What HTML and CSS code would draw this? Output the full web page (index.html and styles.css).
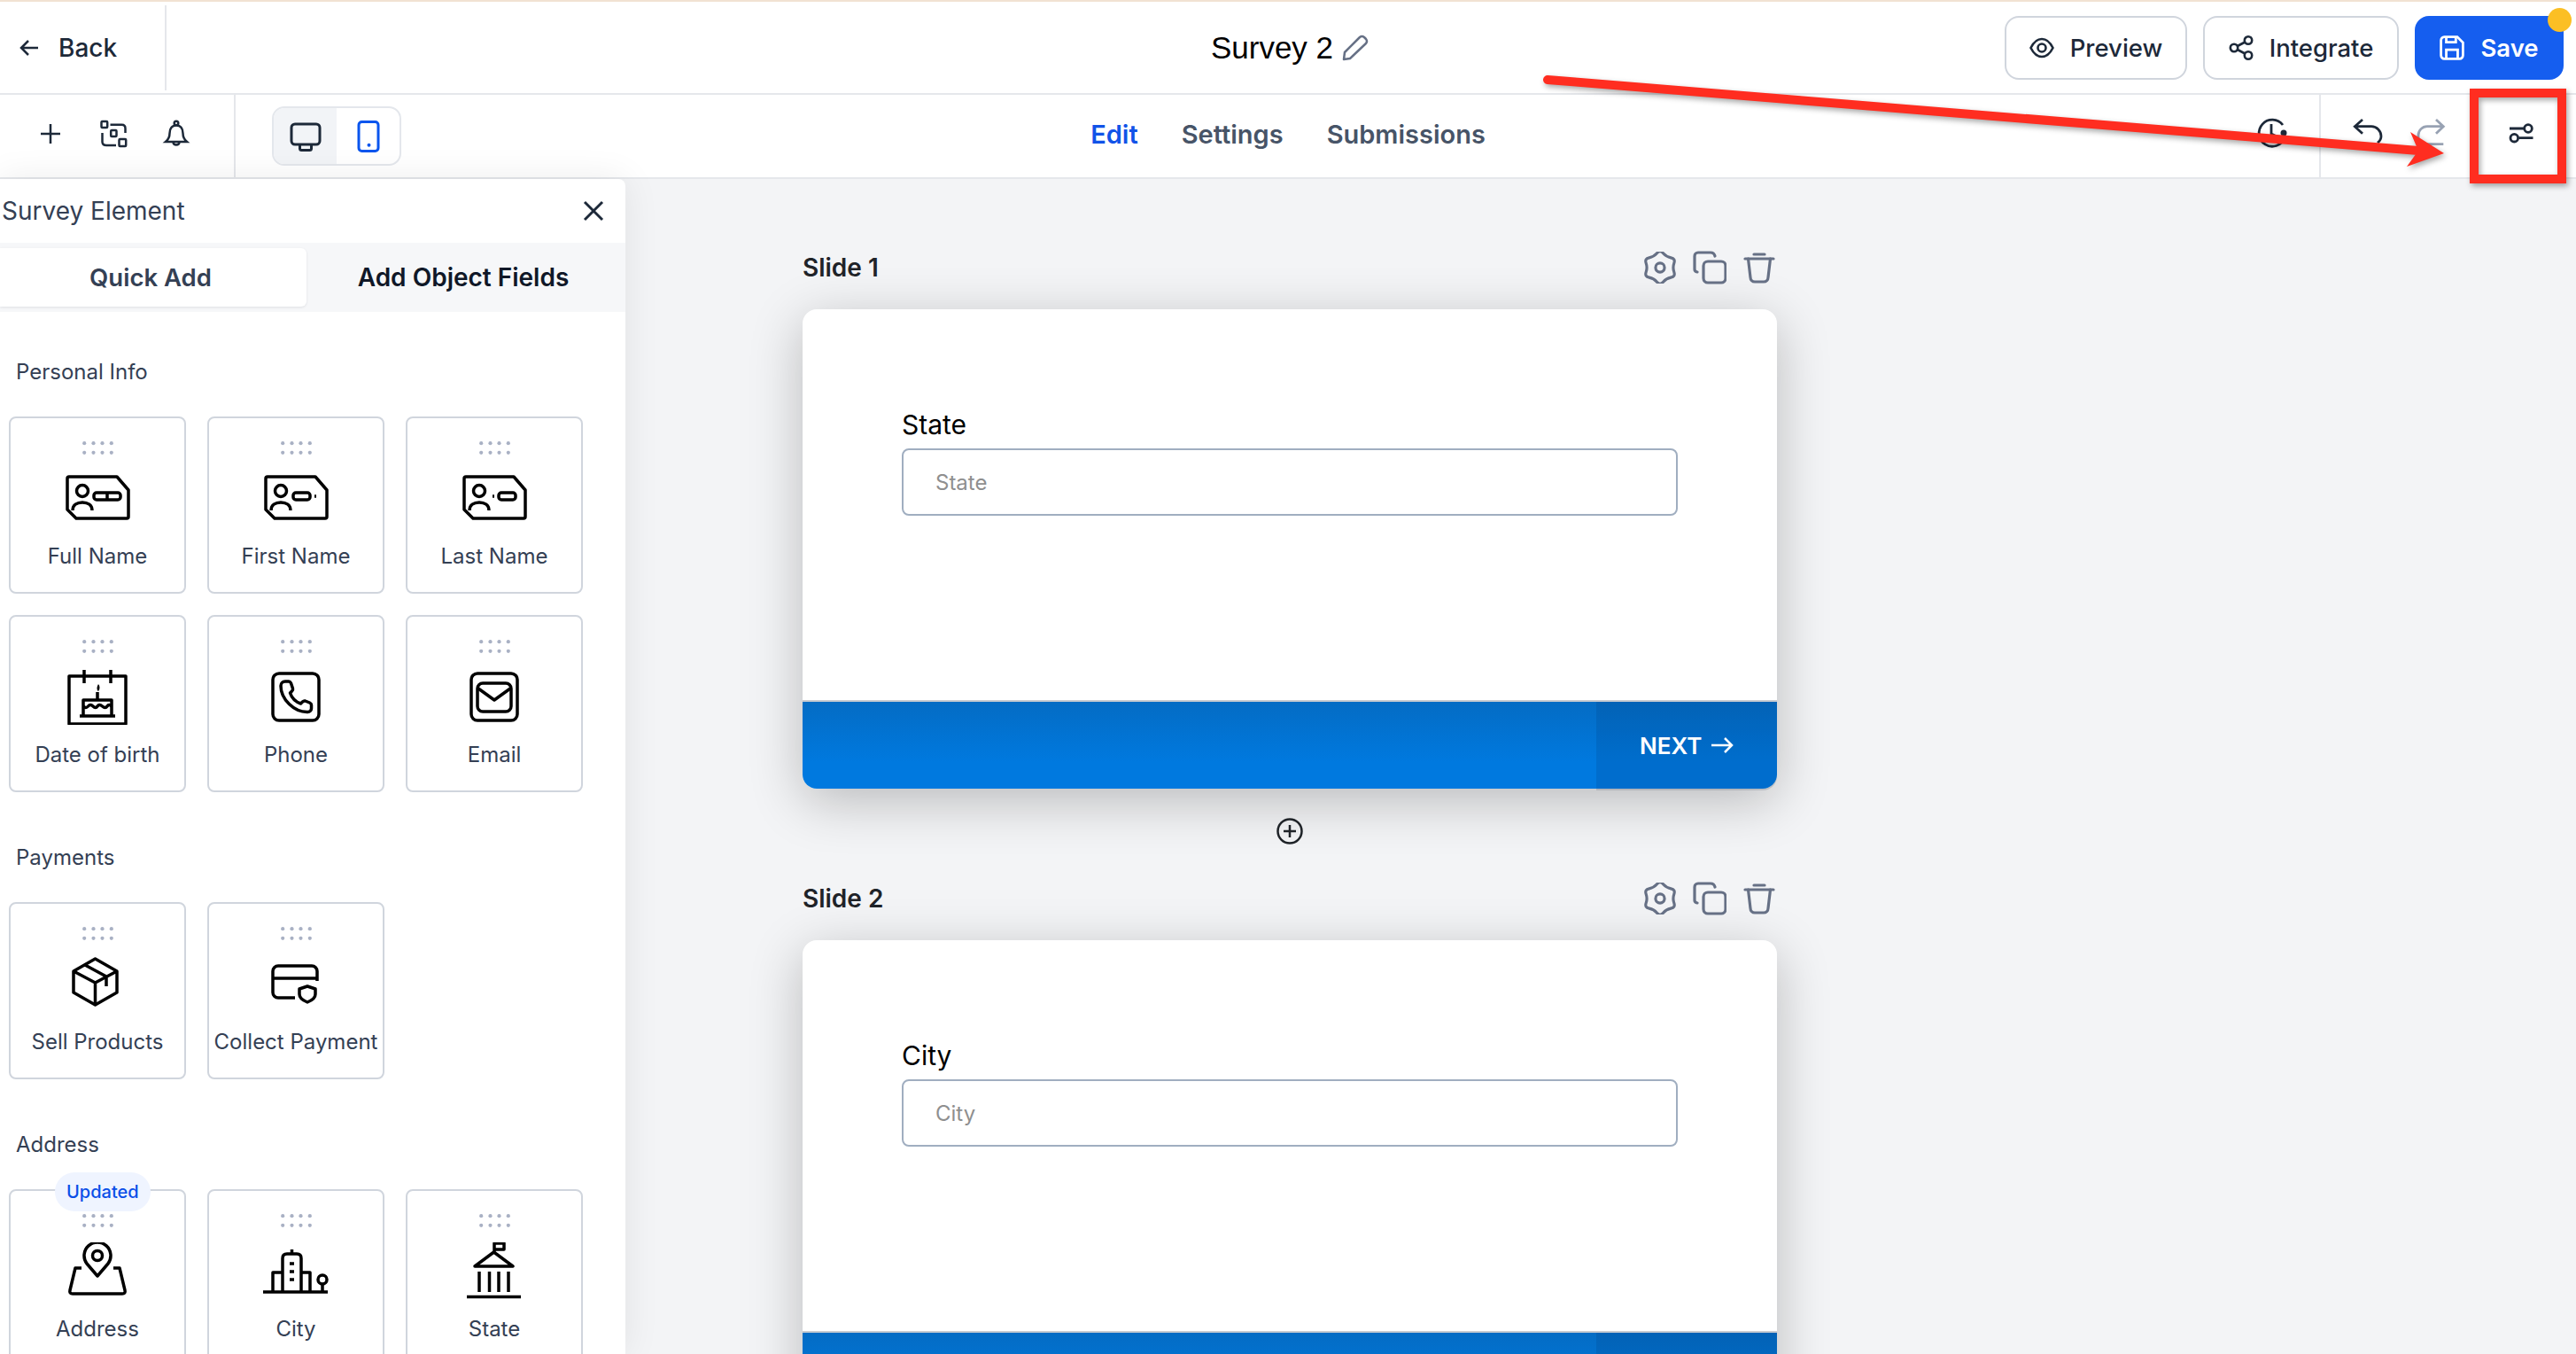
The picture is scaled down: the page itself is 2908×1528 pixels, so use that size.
FILE: index.html
```html
<!DOCTYPE html>
<html lang="en">

<head>
    <meta charset="UTF-8">
    <title>Survey 2</title>
    <link rel="stylesheet" href="styles.css">
</head>

<body>
    <svg class="defs" width="0" height="0">
        <symbol id="dots" viewBox="0 0 35 15">
            <g fill="#a9b1c4">
                <circle cx="2.200" cy="2.200" r="2.100"/><circle cx="12.500" cy="2.200" r="2.100"/><circle cx="22.500" cy="2.200" r="2.100"/><circle cx="32.800" cy="2.200" r="2.100"/>
                <circle cx="2.200" cy="12.800" r="2.100"/><circle cx="12.500" cy="12.800" r="2.100"/><circle cx="22.500" cy="12.800" r="2.100"/><circle cx="32.800" cy="12.800" r="2.100"/>
            </g>
        </symbol>
        <symbol id="gear" viewBox="2.500 2 31 32">
            <path d="M21.100 3.600Q24.250 7.170 28.900 8.100Q33.600 9 32.050 13.500Q30.500 18 32.050 22.500Q33.600 27 28.900 27.900Q24.250 28.830 21.100 32.400Q18 36 14.900 32.400Q11.750 28.830 7.100 27.900Q2.400 27 3.950 22.500Q5.500 18 3.950 13.500Q2.400 9 7.100 8.100Q11.750 7.170 14.900 3.600Q18 0 21.100 3.600z" fill="none" stroke="#667085" stroke-width="2.800"/>
            <circle cx="18" cy="18" r="4.500" fill="none" stroke="#667085" stroke-width="2.800"/>
        </symbol>
        <symbol id="copy" viewBox="0 0 38 38">
            <g fill="none" stroke="#667085" stroke-width="3.200" stroke-linecap="round">
                <rect x="12" y="12" width="25" height="24" rx="5"/>
                <path d="M5 24Q2 23.500 2 21V6a4 4 0 0 1 4-4H20q4 0 5 4"/>
            </g>
        </symbol>
        <symbol id="trash" viewBox="0 0 36 36">
            <g fill="none" stroke="#667085" stroke-width="3.200" stroke-linecap="round">
                <path d="M2 8h32"/>
                <path d="M12 3h12"/>
                <path d="M5.500 8l2.500 21a5 5 0 0 0 5 5h10a5 5 0 0 0 5-5l2.500-21"/>
            </g>
        </symbol>
        <symbol id="id-base" viewBox="0 0 80 64">
            <path d="M8 8h54l13 15v30a2 2 0 0 1-2 2H16L6 45V10a2 2 0 0 1 2-2z"/>
            <circle cx="23" cy="24" r="6.500"/>
            <path d="M12 46c0-6 5-9 11-9s11 3 11 9"/>
        </symbol>
    </svg>

    <div class="stripe"></div>

    <header class="topbar">
        <a class="back">
            <svg class="i24" viewBox="0 0 24 24"><path d="M21 12H3M10 4l-8 8 8 8"/></svg>
            <span>Back</span>
        </a>
        <div class="title">
            <span>Survey 2</span>
            <svg class="pencil" viewBox="0 0 30 30"><path d="M2 28l1-8L20 3q2.500-2 5 0l2 2q2 2.500 0 5L9 27z"/></svg>
        </div>
        <div class="actions">
            <button class="btn btn-preview">
                <svg class="btn-icon" viewBox="0 0 28 24"><path d="M1.500 12C5 5 9 2 14 2s9 3 12.500 10C23 19 19 22 14 22S5 19 1.500 12z"/><circle cx="14" cy="12" r="4.500"/></svg>
                Preview
            </button>
            <button class="btn btn-integrate">
                <svg class="btn-icon" viewBox="0 0 28 28"><circle cx="6" cy="14" r="4.200"/><circle cx="22" cy="5.500" r="4.200"/><circle cx="22" cy="22.500" r="4.200"/><path d="M9.800 12l8.500-4.500M9.800 16l8.500 4.500"/></svg>
                Integrate
            </button>
            <button class="btn btn-save">
                <svg class="btn-icon" viewBox="0 0 26 26"><path d="M5 1.500h13.500l6 6V21a3.500 3.500 0 0 1-3.500 3.500H5A3.500 3.500 0 0 1 1.500 21V5A3.500 3.500 0 0 1 5 1.500z"/><path d="M7 1.500V7h10V1.500M7 24.500V15h12v9.500"/></svg>
                Save
                <span class="save-dot"></span>
            </button>
        </div>
    </header>

    <nav class="toolbar">
        <div class="tools-left">
            <div class="tools-add">
                <svg class="tool" viewBox="0 0 36 36"><path d="M18 7v22M7 18h22"/></svg>
                <svg class="tool" viewBox="0 0 36 36"><rect x="4.500" y="4" width="6.700" height="7" rx="1"/><rect x="15.200" y="14" width="6.300" height="7" rx="1"/><rect x="24.500" y="24" width="7.700" height="8" rx="1"/><path d="M14.500 7.700H27.500q4 0 4 4.300V17M5.500 17V27q0 4 4.700 4H21"/></svg>
                <svg class="tool" viewBox="0 0 36 36"><path d="M18 8.500c-5 0-7.500 4-7.500 9 0 4.500-1.500 7-4.500 9.500h24c-3-2.500-4.500-5-4.500-9.500 0-5-2.500-9-7.500-9z"/><circle cx="18" cy="6" r="2.300"/><path d="M14.500 27.500c.5 4 6.500 4 7 0"/></svg>
            </div>
            <div class="device-toggle">
                <span class="device device-on">
                    <svg class="device-icon" viewBox="0 0 36 36"><rect x="2" y="4" width="32" height="23" rx="4"/><path d="M11.500 27v4.500a2 2 0 0 0 2 2h9a2 2 0 0 0 2-2V27"/></svg>
                </span>
                <span class="device">
                    <svg class="device-icon device-phone" viewBox="0 0 36 36"><rect x="7" y="1.500" width="22" height="33" rx="3.500"/><circle class="phone-dot" cx="18.500" cy="27.800" r="2"/></svg>
                </span>
            </div>
        </div>
        <div class="tabs">
            <a class="tab tab-on">Edit</a>
            <a class="tab">Settings</a>
            <a class="tab">Submissions</a>
        </div>
        <div class="tools-right">
            <svg class="tool-r" viewBox="0 0 40 40"><path d="M31 10A15 15 0 1 0 33 25M18 9v11l6 3"/><circle class="fill-dark" cx="32" cy="19" r="3.500"/></svg>
            <div class="history">
                <svg class="tool-r" viewBox="0 0 40 40"><path d="M15 4L6.300 11.700L15 19.700M6.300 11.700H25a11 11 0 0 1 11 11c0 3-1.500 5.500-4 7.500"/></svg>
                <svg class="tool-r tool-off" viewBox="0 0 40 40"><path d="M26 4l8.300 7.700L26 19.700M34.300 11.700H16a10 10 0 0 0-10 10v4M6 31.700H34.300"/></svg>
                <svg class="tool-r" viewBox="0 0 40 40"><path d="M7 14H23.500M17.500 24.700H33.500"/><circle cx="28" cy="14" r="4.300"/><circle cx="12.300" cy="24.700" r="4.300"/></svg>
            </div>
        </div>
    </nav>

    <main class="workspace">
        <aside class="panel">
            <div class="panel-head">
                <span>Survey Element</span>
                <svg class="close" viewBox="0 0 24 24"><path d="M2 2l20 20M22 2L2 22"/></svg>
            </div>
            <div class="panel-tabs">
                <span class="panel-tab panel-tab-on">Quick Add</span>
                <span class="panel-tab">Add Object Fields</span>
            </div>

            <section class="group">
                <h4>Personal Info</h4>
                <div class="cards">
                    <div class="card">
                        <svg class="dots"><use href="#dots"/></svg>
                        <svg class="el" viewBox="0 0 80 64"><use href="#id-base"/><rect x="36" y="26" width="30" height="8" rx="3"/><path d="M51 26v8"/></svg>
                        <span>Full Name</span>
                    </div>
                    <div class="card">
                        <svg class="dots"><use href="#dots"/></svg>
                        <svg class="el" viewBox="0 0 80 64"><use href="#id-base"/><rect x="37" y="26" width="19" height="8" rx="3"/><path d="M61 30h2"/></svg>
                        <span>First Name</span>
                    </div>
                    <div class="card">
                        <svg class="dots"><use href="#dots"/></svg>
                        <svg class="el" viewBox="0 0 80 64"><use href="#id-base"/><path d="M38 30h2"/><rect x="45" y="26" width="19" height="8" rx="3"/></svg>
                        <span>Last Name</span>
                    </div>
                    <div class="card">
                        <svg class="dots"><use href="#dots"/></svg>
                        <svg class="el" viewBox="0 0 80 64"><path d="M8 9h64v54H8zM25 2v15M55 2v15M40 36v-9"/><path class="el-fill" d="M41 18c2 2 2 6 0 8-2-1-2-5 0-8z"/><path d="M24 53V36h32v17M20 54h40"/><path d="M24 43q3 3 5.500 0t5.500 0q3 3 5 0t5.500 0 5.500 0 5 0"/></svg>
                        <span>Date of birth</span>
                    </div>
                    <div class="card">
                        <svg class="dots"><use href="#dots"/></svg>
                        <svg class="el" viewBox="0 0 80 64"><rect x="14" y="6" width="52" height="53" rx="7"/><path d="M28 15h4c1 0 2 1 2.500 2l2 6c.3 1 0 2-1 3l-2 2c2 6 6 10 12 12l2-2c1-1 2-1.300 3-1l5 2c1 .5 2 1.500 2 2.500v4c0 2-2 4-4 4C38 50 23 35 23 20c0-3 2-5 5-5z"/></svg>
                        <span>Phone</span>
                    </div>
                    <div class="card">
                        <svg class="dots"><use href="#dots"/></svg>
                        <svg class="el" viewBox="0 0 80 64"><rect x="14" y="6" width="52" height="53" rx="7"/><rect x="21" y="17" width="38" height="32" rx="6"/><path d="M22 23l18 13 18-13"/></svg>
                        <span>Email</span>
                    </div>
                </div>
            </section>

            <section class="group">
                <h4>Payments</h4>
                <div class="cards">
                    <div class="card">
                        <svg class="dots"><use href="#dots"/></svg>
                        <svg class="el" viewBox="0 0 80 64"><path d="M37.500 4L62 18v24L37.500 56 13 42V18zM13 18l24.500 13L62 18M37.500 31v25M26 11l24 13v11"/></svg>
                        <span>Sell Products</span>
                    </div>
                    <div class="card">
                        <svg class="dots"><use href="#dots"/></svg>
                        <svg class="el" viewBox="0 0 80 64"><path d="M39 48H20a6 6 0 0 1-6-6V18a6 6 0 0 1 6-6h38a6 6 0 0 1 6 6v11M14 26h50"/><path d="M53 35l9 3v6c0 4-4 7-9 9-5-2-9-5-9-9v-6z"/></svg>
                        <span>Collect Payment</span>
                    </div>
                </div>
            </section>

            <section class="group">
                <h4>Address</h4>
                <div class="cards">
                    <div class="card">
                        <span class="badge">Updated</span>
                        <svg class="dots"><use href="#dots"/></svg>
                        <svg class="el" viewBox="0 0 80 64"><path d="M40 38L28 24a15 15 0 1 1 24 0z"/><circle cx="40" cy="15" r="5.500"/><path d="M22 29h-7L9 54q-1 4 3 4h56q4 0 3-4l-6-25h-7"/></svg>
                        <span>Address</span>
                    </div>
                    <div class="card">
                        <svg class="dots"><use href="#dots"/></svg>
                        <svg class="el" viewBox="0 0 80 64"><path d="M3 56h73M25 56V18q0-5 5-5h11q5 0 5 5v38M35.500 13V8M14 56V34h11M46 34h10v22M33 24h5M33 33h5M33 42h5M70 47v9"/><circle cx="70" cy="42" r="5"/></svg>
                        <span>City</span>
                    </div>
                    <div class="card">
                        <svg class="dots"><use href="#dots"/></svg>
                        <svg class="el" viewBox="0 0 80 64"><path d="M40 13V1h11v7H40M18 27l21.500-16L61 27zM23 33v23M34.500 33v23M45 33v23M56 33v23M9 61.500h61"/></svg>
                        <span>State</span>
                    </div>
                </div>
            </section>
        </aside>

        <section class="canvas">
            <div class="slide-head">
                <span>Slide 1</span>
                <div class="slide-tools">
                    <svg class="st-gear"><use href="#gear"/></svg>
                    <svg class="st-copy"><use href="#copy"/></svg>
                    <svg class="st-trash"><use href="#trash"/></svg>
                </div>
            </div>
            <div class="slide">
                <div class="slide-body">
                    <label>State</label>
                    <input type="text" placeholder="State">
                </div>
                <div class="slide-bar">
                    <span class="next">NEXT <svg class="next-arrow" viewBox="0 0 26 24"><path d="M1 12h23M16 4l8 8-8 8"/></svg></span>
                </div>
            </div>
            <div class="add-slide">
                <svg class="add-icon" viewBox="0 0 30 30"><circle cx="15" cy="15" r="13.500"/><path d="M15 8v14M8 15h14"/></svg>
            </div>
            <div class="slide-head">
                <span>Slide 2</span>
                <div class="slide-tools">
                    <svg class="st-gear"><use href="#gear"/></svg>
                    <svg class="st-copy"><use href="#copy"/></svg>
                    <svg class="st-trash"><use href="#trash"/></svg>
                </div>
            </div>
            <div class="slide">
                <div class="slide-body">
                    <label>City</label>
                    <input type="text" placeholder="City">
                </div>
                <div class="slide-bar">
                    <span class="next"></span>
                </div>
            </div>
        </section>
    </main>

    <!-- annotation drawn on top of the screenshot -->
    <svg class="markup" viewBox="0 0 2908 1528">
        <path d="M1747 90L2730 170" stroke="#ff2d20" stroke-width="10" stroke-linecap="round" fill="none"/>
        <polygon points="2759,173 2721,149 2730,170 2717,188" fill="#ff2d20"/>
        <rect x="2793" y="105" width="99" height="97" stroke="#ff2d20" stroke-width="10" fill="none"/>
    </svg>
</body>

</html>
```

FILE: styles.css
```css
* {
    box-sizing: border-box;
}

html,
body {
    margin: 0;
    height: 1528px;
    overflow: hidden;
}

body {
    position: relative;
    display: flex;
    flex-direction: column;
    background-color: #f3f4f6;
    font-family: Inter, "Liberation Sans", sans-serif;
    color: #1f2937;
}

.defs {
    position: absolute;
}

.stripe {
    height: 2px;
    background-color: #f1e2d2;
}

/* top bar */
.topbar {
    display: grid;
    grid-template-columns: 1fr auto 1fr;
    align-items: center;
    height: 105px;
    background-color: #ffffff;
    border-bottom: 2px solid #e5e7eb;
}

.back {
    display: flex;
    align-items: center;
    gap: 20px;
    width: 188px;
    height: 96px;
    padding-left: 22px;
    border-right: 2px solid #e5e7eb;
    font-size: 28px;
    font-weight: 500;
    color: #1d2939;
}

.i24 {
    width: 24px;
    height: 24px;
    fill: none;
    stroke: #1d2939;
    stroke-width: 2.500;
}

.title {
    display: flex;
    align-items: center;
    gap: 10px;
    margin-left: 4px;
    font-family: "Liberation Sans", sans-serif;
    font-size: 35px;
    color: #000000;
}

.pencil {
    width: 30px;
    height: 30px;
    fill: none;
    stroke: #667085;
    stroke-width: 2.500;
    stroke-linejoin: round;
}

.actions {
    display: flex;
    justify-content: flex-end;
    gap: 18px;
    padding-right: 14px;
}

.btn {
    position: relative;
    display: flex;
    align-items: center;
    justify-content: center;
    gap: 18px;
    height: 72px;
    padding: 0;
    background-color: #ffffff;
    border: 2px solid #d0d5dd;
    border-radius: 16px;
    font-family: inherit;
    font-size: 27.500px;
    font-weight: 500;
    color: #1d2939;
}

.btn-preview {
    width: 206px;
}

.btn-integrate {
    width: 221px;
}

.btn-icon {
    width: 28px;
    height: 28px;
    fill: none;
    stroke: #1d2939;
    stroke-width: 2.600;
}

.btn-save {
    width: 168px;
    background-color: #155eef;
    border-color: #155eef;
    color: #ffffff;
    font-weight: 600;
}

.btn-save .btn-icon {
    stroke: #ffffff;
}

.save-dot {
    position: absolute;
    top: -11px;
    right: -11px;
    width: 27px;
    height: 27px;
    border-radius: 50%;
    background-color: #fbbf24;
}

/* second bar */
.toolbar {
    display: grid;
    grid-template-columns: 1fr auto 1fr;
    align-items: stretch;
    height: 95px;
    background-color: #ffffff;
    border-bottom: 2px solid #e5e7eb;
}

.tools-left {
    display: flex;
    align-items: center;
}

.tools-add {
    display: flex;
    align-items: center;
    gap: 35px;
    width: 266px;
    height: 100%;
    padding: 0 0 5px 39px;
    border-right: 2px solid #e5e7eb;
}

.tool {
    flex: none;
    width: 36px;
    height: 36px;
    fill: none;
    stroke: #1d2939;
    stroke-width: 2.500;
}

.device-toggle {
    display: flex;
    overflow: hidden;
    width: 146px;
    height: 67px;
    margin-left: 41px;
    border: 2px solid #e4e7ec;
    border-radius: 14px;
}

.device {
    display: flex;
    flex: 1;
    align-items: center;
    justify-content: center;
}

.device-on {
    background-color: #f2f4f7;
}

.device-icon {
    width: 36px;
    height: 36px;
    fill: none;
    stroke: #1d2939;
    stroke-width: 3;
}

.device-phone {
    stroke: #0a55ee;
}

.phone-dot {
    fill: #0a55ee;
    stroke: none;
}

.tabs {
    display: flex;
    align-items: center;
    gap: 49px;
    padding-bottom: 4px;
}

.tab {
    font-size: 29px;
    font-weight: 600;
    color: #475467;
}

.tab-on {
    color: #1153e8;
}

.tools-right {
    display: flex;
    align-items: center;
    justify-content: flex-end;
    gap: 32px;
    padding-right: 42px;
}

.tool-r {
    flex: none;
    width: 40px;
    height: 40px;
    margin-bottom: 5px;
    fill: none;
    stroke: #1d2939;
    stroke-width: 2.800;
}

.fill-dark {
    fill: #1d2939;
    stroke: none;
}

.tool-off {
    stroke: #98a2b3;
}

.history {
    display: flex;
    align-items: center;
    align-self: stretch;
    gap: 32px;
    padding-left: 32px;
    border-left: 2px solid #e5e7eb;
}

.history .tool-r:last-child {
    margin-left: 30px;
}

/* left panel */
.workspace {
    display: flex;
    flex: 1;
    min-height: 0;
}

.panel {
    position: relative;
    z-index: 1;
    flex: none;
    width: 706px;
    overflow: hidden;
    background-color: #ffffff;
    border-top-right-radius: 8px;
    box-shadow: 0 0 40px rgba(0, 0, 0, 0.08);
}

.panel-head {
    display: flex;
    align-items: center;
    justify-content: space-between;
    height: 72px;
    padding: 0 24px 0 2px;
    font-size: 28px;
    color: #344054;
}

.close {
    width: 24px;
    height: 24px;
    fill: none;
    stroke: #1d2939;
    stroke-width: 3;
}

.panel-tabs {
    display: flex;
    height: 78px;
    padding: 6px 6px 6px 0;
    background-color: #f6f7f9;
}

.panel-tab {
    display: flex;
    flex: 1;
    align-items: center;
    justify-content: center;
    font-size: 28px;
    font-weight: 600;
    color: #101828;
}

.panel-tab-on {
    flex: none;
    width: 346px;
    padding-right: 6px;
    background-color: #ffffff;
    border-radius: 0 6px 6px 0;
    box-shadow: 0 1px 3px rgba(16, 24, 40, 0.1);
    font-size: 27.500px;
    color: #344054;
}

.group {
    padding: 52px 0 0 10px;
}

.group + .group {
    padding-top: 58px;
}

.group h4 {
    margin: 0 0 34px 8px;
    font-size: 24px;
    font-weight: 400;
    line-height: 32px;
    color: #344054;
}

.cards {
    display: grid;
    grid-template-columns: repeat(3, 200px);
    gap: 24px;
}

.card {
    position: relative;
    display: flex;
    flex-direction: column;
    align-items: center;
    height: 200px;
    padding-top: 26px;
    background-color: #ffffff;
    border: 2px solid #d0d5dd;
    border-radius: 8px;
    font-size: 24px;
    color: #344054;
}

.card span {
    margin-top: 18px;
    line-height: 32px;
    white-space: nowrap;
}

.dots {
    flex: none;
    width: 35px;
    height: 15px;
}

.el {
    flex: none;
    width: 80px;
    height: 64px;
    margin-top: 17px;
    fill: none;
    stroke: #000000;
    stroke-width: 3.500;
    stroke-linejoin: round;
}

.el-fill {
    fill: #000000;
    stroke: none;
}

.card .badge {
    position: absolute;
    top: -21px;
    left: 50px;
    margin: 0;
    padding: 0 13px;
    height: 44px;
    line-height: 44px;
    border-radius: 22px;
    background-color: #eff4ff;
    font-size: 20px;
    font-weight: 500;
    color: #0a4fe8;
}

/* slides */
.canvas {
    flex: 1;
    min-width: 0;
    overflow: hidden;
    padding: 80px 0 0 200px;
}

.slide-head {
    display: flex;
    align-items: center;
    justify-content: space-between;
    width: 1100px;
    height: 40px;
    margin-bottom: 27px;
    padding-right: 2px;
    font-size: 28px;
    font-weight: 600;
    color: #1f2328;
}

.slide-tools {
    display: flex;
    align-items: center;
    gap: 19px;
}

.st-gear {
    width: 36px;
    height: 36px;
}

.st-copy {
    width: 38px;
    height: 38px;
}

.st-trash {
    width: 36px;
    height: 36px;
}

.slide {
    width: 1100px;
    background-color: #ffffff;
    border-radius: 16px;
    box-shadow: 0 14px 60px rgba(0, 0, 0, 0.24);
}

.slide-body {
    display: flex;
    flex-direction: column;
    height: 441px;
    padding: 113px 112px 0 112px;
}

.slide-body label {
    margin-bottom: 10px;
    font-size: 30px;
    line-height: 34px;
    color: #000000;
}

.slide-body input {
    width: 100%;
    height: 76px;
    padding: 0 36px;
    border: 2px solid #a0aec0;
    border-radius: 8px;
    font-family: inherit;
    font-size: 24px;
}

.slide-body input::placeholder {
    color: #8f8f8f;
}

.slide-bar {
    display: flex;
    justify-content: flex-end;
    height: 100px;
    border-top: 2px solid #c9cbd0;
    border-radius: 0 0 16px 16px;
    background: linear-gradient(#046cc4, #0079df 70%);
}

.next {
    display: flex;
    align-items: center;
    gap: 10px;
    width: 204px;
    padding-left: 49px;
    background-color: rgba(0, 40, 100, 0.14);
    border-radius: 0 0 16px 0;
    box-shadow: 0 2px 0 rgba(120, 125, 140, 0.3);
    font-size: 26px;
    font-weight: 600;
    color: #ffffff;
}

.next-arrow {
    width: 26px;
    height: 24px;
    fill: none;
    stroke: #ffffff;
    stroke-width: 2.500;
}

.add-slide {
    display: flex;
    justify-content: center;
    width: 1100px;
    padding: 33px 0 41px;
}

.add-icon {
    width: 30px;
    height: 30px;
    fill: none;
    stroke: #1f2328;
    stroke-width: 2.500;
}

/* red annotation */
.markup {
    position: absolute;
    top: 0;
    left: 0;
    z-index: 2;
    width: 2908px;
    height: 1528px;
    pointer-events: none;
    filter: drop-shadow(2px 3px 3px rgba(0, 0, 0, 0.35));
}
```
